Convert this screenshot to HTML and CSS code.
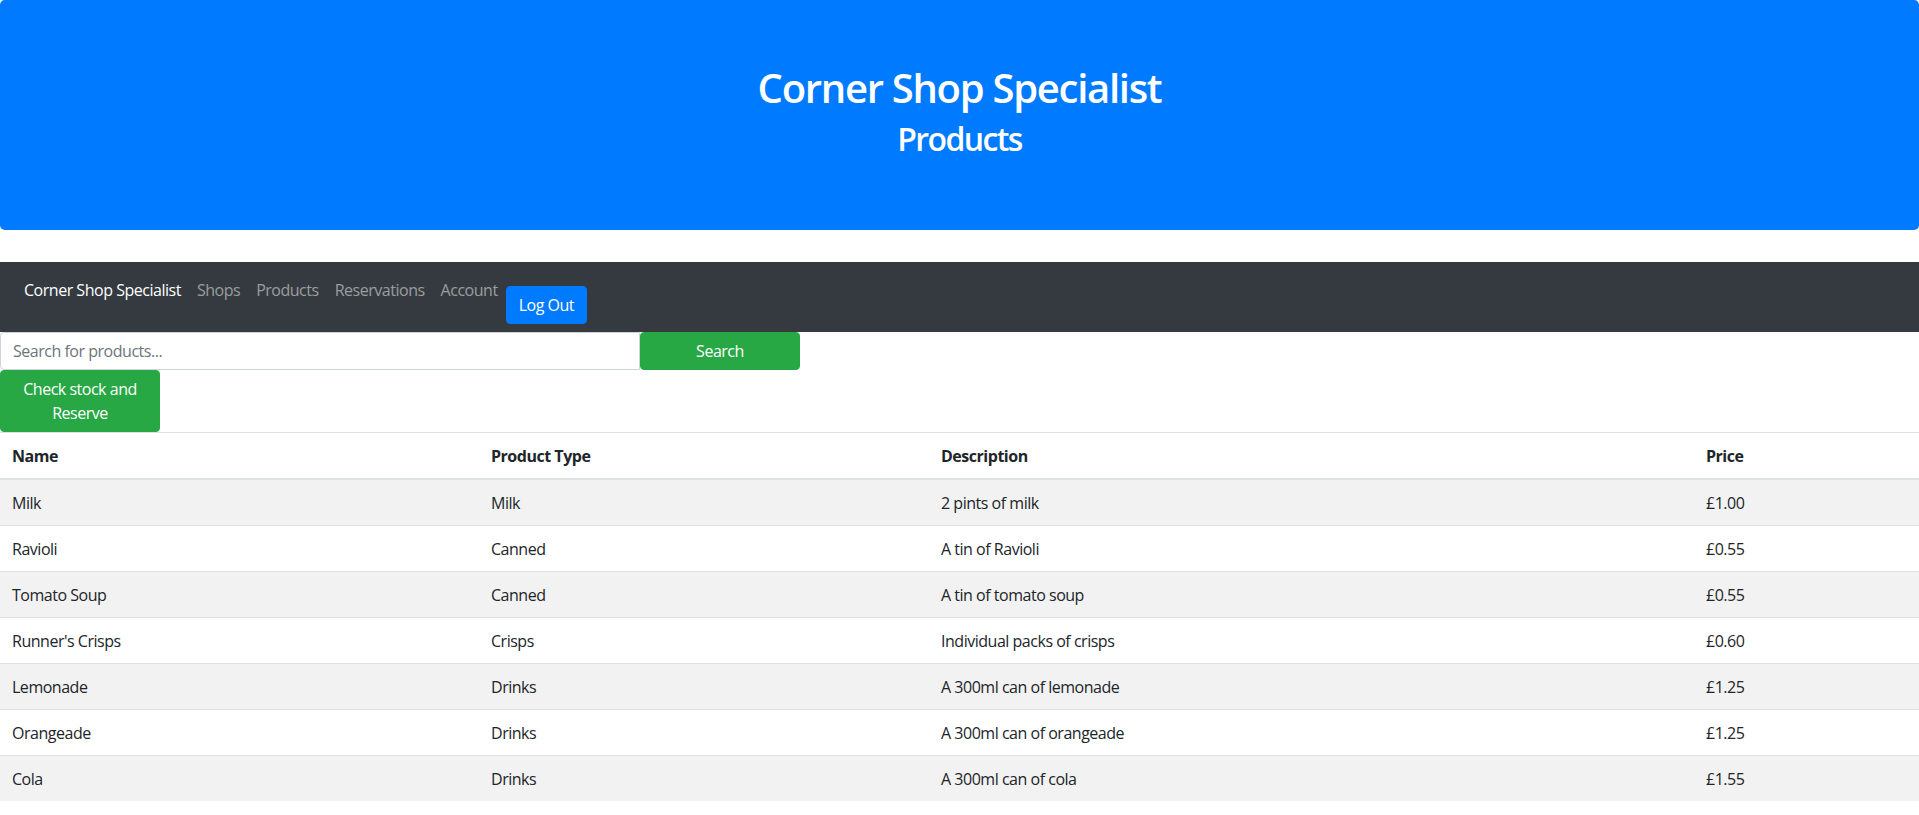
FILE: index.html
```html
<!DOCTYPE html>
<html lang="en">
<head>
<meta charset="utf-8">
<title>Corner Shop Specialist - Products</title>
<link rel="stylesheet" href="styles.css">
</head>
<body>
<header class="jumbotron">
  <h1 class="jumbo-title">Corner Shop Specialist</h1>
  <h2 class="jumbo-sub">Products</h2>
</header>
<nav class="navbar">
  <a class="nav-link brand" href="#">Corner Shop Specialist</a>
  <a class="nav-link" href="#">Shops</a>
  <a class="nav-link" href="#">Products</a>
  <a class="nav-link" href="#">Reservations</a>
  <a class="nav-link" href="#">Account</a>
  <button class="btn btn-primary logout" type="button">Log Out</button>
</nav>
<form class="search-row">
  <input class="search-input" type="text" placeholder="Search for products...">
  <button class="btn btn-success search-btn" type="button">Search</button>
</form>
<button class="btn btn-success reserve-btn" type="button">Check stock and Reserve</button>
<table class="products">
  <colgroup>
    <col class="col-name">
    <col class="col-type">
    <col class="col-desc">
    <col class="col-price">
  </colgroup>
  <thead>
    <tr><th>Name</th><th>Product Type</th><th>Description</th><th>Price</th></tr>
  </thead>
  <tbody>
    <tr><td>Milk</td><td>Milk</td><td>2 pints of milk</td><td>£1.00</td></tr>
    <tr><td>Ravioli</td><td>Canned</td><td>A tin of Ravioli</td><td>£0.55</td></tr>
    <tr><td>Tomato Soup</td><td>Canned</td><td>A tin of tomato soup</td><td>£0.55</td></tr>
    <tr><td>Runner's Crisps</td><td>Crisps</td><td>Individual packs of crisps</td><td>£0.60</td></tr>
    <tr><td>Lemonade</td><td>Drinks</td><td>A 300ml can of lemonade</td><td>£1.25</td></tr>
    <tr><td>Orangeade</td><td>Drinks</td><td>A 300ml can of orangeade</td><td>£1.25</td></tr>
    <tr><td>Cola</td><td>Drinks</td><td>A 300ml can of cola</td><td>£1.55</td></tr>
  </tbody>
</table>
</body>
</html>
```

FILE: styles.css
```css
html, body {
  margin: 0;
  padding: 0;
}
body {
  font-family: "Open Sans", "Noto Sans", "Liberation Sans", sans-serif;
  font-size: 16px;
  line-height: 1.5;
  color: #212529;
  background: #fff;
  letter-spacing: -0.03em;
}
.jumbotron {
  background: #007bff;
  color: #fff;
  text-align: center;
  padding: 64px 32px;
  margin-bottom: 32px;
  border-radius: 4.8px;
}
.jumbo-title {
  margin: 0 0 8px;
  font-size: 40px;
  font-weight: 600;
  line-height: 48px;
  letter-spacing: -0.032em;
}
.jumbo-sub {
  margin: 0 0 8px;
  font-size: 32px;
  font-weight: 600;
  line-height: 38.4px;
  letter-spacing: -0.05em;
}
.navbar {
  display: flex;
  align-items: flex-start;
  background: #343a40;
  padding: 8px 16px;
}
.nav-link {
  display: block;
  padding: 8px;
  line-height: 24px;
  color: rgba(255, 255, 255, 0.5);
  text-decoration: none;
}
.nav-link.brand {
  color: #fff;
}
.btn {
  font-family: inherit;
  font-size: 16px;
  line-height: 24px;
  letter-spacing: inherit;
  padding: 6px 12px;
  border: 1px solid transparent;
  border-radius: 4px;
  color: #fff;
  cursor: pointer;
  text-align: center;
}
.btn-primary {
  background: #007bff;
  border-color: #007bff;
}
.btn-success {
  background: #28a745;
  border-color: #28a745;
}
.logout {
  margin-top: 16px;
}
.search-row {
  display: flex;
  margin: 0;
}
.search-input {
  box-sizing: border-box;
  width: 640px;
  height: 38px;
  padding: 6px 12px;
  font-family: inherit;
  font-size: 16px;
  letter-spacing: inherit;
  color: #495057;
  border: 1px solid #ced4da;
  border-radius: 4px 0 0 4px;
  outline: none;
}
.search-input::placeholder {
  color: #6c757d;
}
.search-btn {
  width: 160px;
  height: 38px;
}
.reserve-btn {
  display: block;
  width: 160px;
}
.products {
  width: 100%;
  table-layout: fixed;
  border-collapse: separate;
  border-spacing: 0;
  margin: 0;
}
.col-name { width: 479px; }
.col-type { width: 450px; }
.col-desc { width: 765px; }
.col-price { width: 225px; }
.products th,
.products td {
  text-align: left;
  padding: 10.5px 12px;
  line-height: 24px;
  vertical-align: top;
}
.products th {
  font-weight: 700;
  border-top: 1px solid #dee2e6;
  border-bottom: 2px solid #dee2e6;
}
.products td {
  border-top: 1px solid #dee2e6;
}
.products tbody tr:first-child td {
  border-top: 0;
}
.products tbody tr:nth-child(odd) td {
  background: #f2f2f2;
}
```
